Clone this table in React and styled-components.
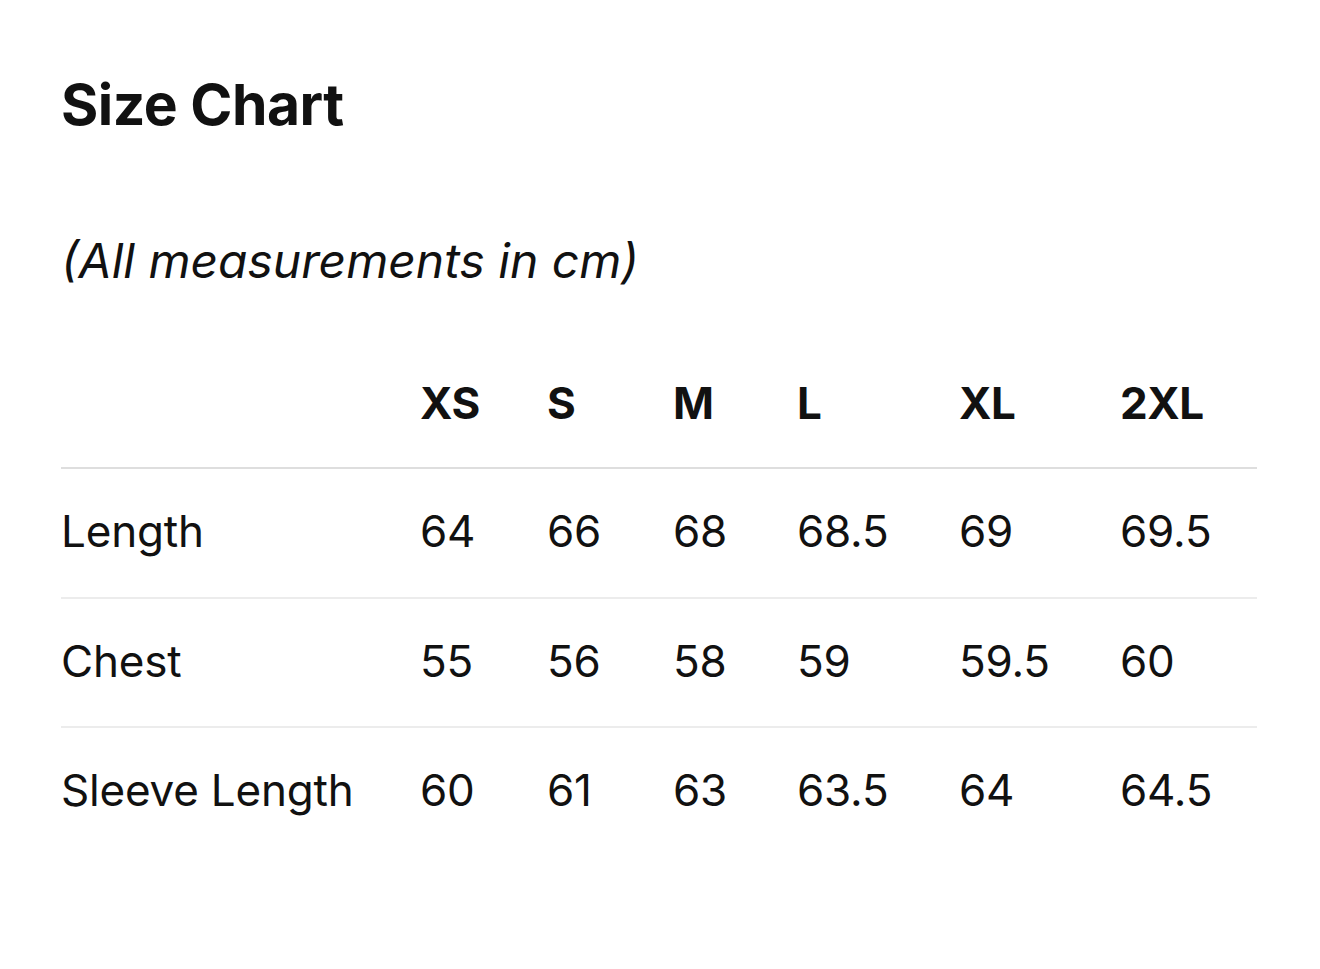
import React from "react";
import styled, { createGlobalStyle } from "styled-components";

const Global = createGlobalStyle`
  html, body { margin: 0; padding: 0; background: #fff; }
  body { font-family: Inter, "Noto Sans", sans-serif; color: #111; }
`;

const Page = styled.div`
  padding: 66px 63px 0 61px;
`;

const Title = styled.h1`
  margin: 0;
  font-size: 57px;
  font-weight: 700;
  letter-spacing: -0.5px;
  line-height: 78px;
`;

const Note = styled.p`
  margin: 87px 0 0;
  font-size: 48px;
  font-style: italic;
  font-weight: 400;
  letter-spacing: 0;
  line-height: 60px;
`;

const Grid = styled.div`
  margin-top: 47px;
  display: grid;
  grid-template-columns: 359px 127px 126px 124px 162px 161px 1fr;
`;

const Row = styled.div`
  display: contents;
`;

const Cell = styled.div`
  height: ${(p) => (p.$first ? 129 : 129.5)}px;
  display: flex;
  align-items: center;
  padding-bottom: ${(p) => (p.$first ? 0 : 3)}px;
  font-size: 44px;
  font-weight: ${(p) => (p.$head ? 700 : 400)};
  letter-spacing: ${(p) => (p.$head ? "-0.5px" : "-0.2px")};
  border-top: ${(p) => (p.$first ? "none" : `2px solid ${p.$afterHead ? "#dedede" : "#ececec"}`)};
  box-sizing: border-box;
  white-space: nowrap;
`;

const sizes = ["XS", "S", "M", "L", "XL", "2XL"];
const rows = [
  ["Length", "64", "66", "68", "68.5", "69", "69.5"],
  ["Chest", "55", "56", "58", "59", "59.5", "60"],
  ["Sleeve Length", "60", "61", "63", "63.5", "64", "64.5"],
];

export default function App() {
  return (
    <>
      <Global />
      <Page>
        <Title>Size Chart</Title>
        <Note>(All measurements in cm)</Note>
        <Grid>
          <Row>
            <Cell $head $first />
            {sizes.map((s) => (
              <Cell key={s} $head $first>{s}</Cell>
            ))}
          </Row>
          {rows.map((r, i) => (
            <Row key={r[0]}>
              {r.map((v, j) => (
                <Cell key={j} $afterHead={i === 0}>{v}</Cell>
              ))}
            </Row>
          ))}
        </Grid>
      </Page>
    </>
  );
}
